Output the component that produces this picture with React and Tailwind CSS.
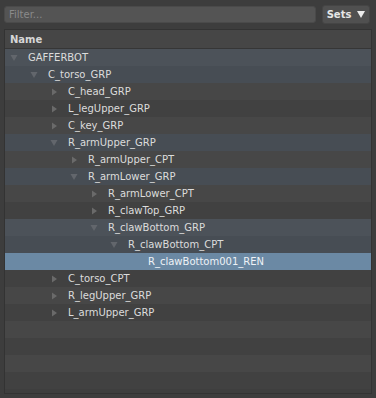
import React from "react"

const nodes = [
  { name: "GAFFERBOT", depth: 0, state: "open" },
  { name: "C_torso_GRP", depth: 1, state: "open" },
  { name: "C_head_GRP", depth: 2, state: "closed" },
  { name: "L_legUpper_GRP", depth: 2, state: "closed" },
  { name: "C_key_GRP", depth: 2, state: "closed" },
  { name: "R_armUpper_GRP", depth: 2, state: "open" },
  { name: "R_armUpper_CPT", depth: 3, state: "closed" },
  { name: "R_armLower_GRP", depth: 3, state: "open" },
  { name: "R_armLower_CPT", depth: 4, state: "closed" },
  { name: "R_clawTop_GRP", depth: 4, state: "closed" },
  { name: "R_clawBottom_GRP", depth: 4, state: "open" },
  { name: "R_clawBottom_CPT", depth: 5, state: "open" },
  { name: "R_clawBottom001_REN", depth: 6, state: "leaf", selected: true },
  { name: "C_torso_CPT", depth: 2, state: "closed" },
  { name: "R_legUpper_GRP", depth: 2, state: "closed" },
  { name: "L_armUpper_GRP", depth: 2, state: "closed" },
]

// indent per depth: 4px + 20px per level
const indents = ["w-[4px]", "w-[24px]", "w-[44px]", "w-[64px]", "w-[84px]", "w-[104px]", "w-[124px]"]

function Arrow({ state }) {
  if (state === "open") {
    return (
      <svg width="19" height="17" viewBox="0 0 19 17" className="shrink-0">
        <polygon points="1.5,6 8.5,6 5,12" fill="#62666c" />
      </svg>
    )
  }
  if (state === "closed") {
    return (
      <svg width="19" height="17" viewBox="0 0 19 17" className="shrink-0">
        <polygon points="3,5.5 8,9 3,12.5" fill="#6a6a6a" />
      </svg>
    )
  }
  return <div className="w-[19px] shrink-0" />
}

function rowBg(node, i) {
  if (node.selected) return "bg-[#6b89a4]"
  if (node.state === "open") return i % 2 === 0 ? "bg-[#4c5259]" : "bg-[#474d54]"
  return i % 2 === 0 ? "bg-[#474747]" : "bg-[#414141]"
}

export default function App() {
  const empty = [16, 17, 18, 19]

  return (
    <div
      className="w-[376px] h-[398px] bg-[#3d3d3d] text-[10px] text-[#dcdcdc] overflow-hidden"
      style={{ fontFamily: '"DejaVu Sans", sans-serif' }}
    >
      <div className="flex items-center pt-[5px] pl-[4px] pr-[6px] gap-[6px]">
        <div className="w-[312px] h-[17px] rounded-[3px] bg-[#545454] border border-[#4a4a4a] flex items-center pl-[4px] text-[#8a8a8a]">
          Filter...
        </div>
        <div className="w-[48px] h-[19px] rounded-[3px] bg-[#505050] border border-[#454545] flex items-center justify-center gap-[6px] font-bold text-[#e6e6e6]">
          <span>Sets</span>
          <svg width="8" height="7" viewBox="0 0 8 7">
            <polygon points="0,0 8,0 4,7" fill="#ececec" />
          </svg>
        </div>
      </div>

      <div className="mt-[5px] ml-[4px] w-[368px] h-[365px] border border-[#333333] bg-[#3e3e3e] overflow-hidden">
        <div className="h-[19px] bg-[#464646] border-b border-[#363636] flex items-center pl-[5px] font-bold text-[#d6d6d6]">
          Name
        </div>
        {nodes.map((node, i) => (
          <div key={node.name} className={`h-[17px] flex items-center ${rowBg(node, i)}`}>
            <div className={`${indents[node.depth]} shrink-0`} />
            <Arrow state={node.state} />
            <span className={node.selected ? "text-[#eef2f6]" : ""}>{node.name}</span>
          </div>
        ))}
        {empty.map((i) => (
          <div key={i} className={`h-[17px] ${i % 2 === 0 ? "bg-[#474747]" : "bg-[#414141]"}`} />
        ))}
      </div>
    </div>
  )
}
